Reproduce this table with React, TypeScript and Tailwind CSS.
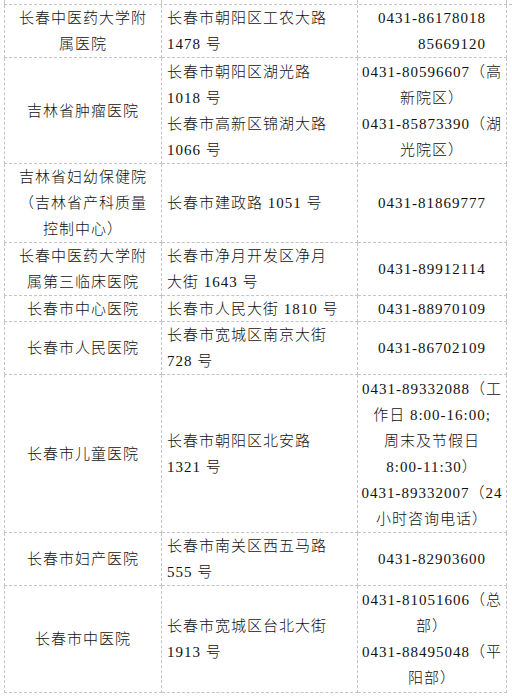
import React from "react"

type Row = {
  h: string
  name: string[]
  addr: string[]
  tel: string[]
  telClass?: string
}

const ROWS: Row[] = [
  { h: "h-[53px]", name: ["长春中医药大学附", "属医院"], addr: ["长春市朝阳区工农大路", "1478 号"], tel: ["0431-86178018", "85669120"], telClass: "items-end" },
  { h: "h-[106px]", name: ["吉林省肿瘤医院"], addr: ["长春市朝阳区湖光路", "1018 号", "长春市高新区锦湖大路", "1066 号"], tel: ["0431-80596607（高", "新院区）", "0431-85873390（湖", "光院区）"] },
  { h: "h-[79px]", name: ["吉林省妇幼保健院", "（吉林省产科质量", "控制中心）"], addr: ["长春市建政路 1051 号"], tel: ["0431-81869777"] },
  { h: "h-[53px]", name: ["长春中医药大学附", "属第三临床医院"], addr: ["长春市净月开发区净月", "大街 1643 号"], tel: ["0431-89912114"] },
  { h: "h-[26px]", name: ["长春市中心医院"], addr: ["长春市人民大街 1810 号"], tel: ["0431-88970109"] },
  { h: "h-[53px]", name: ["长春市人民医院"], addr: ["长春市宽城区南京大街", "728 号"], tel: ["0431-86702109"] },
  { h: "h-[158px]", name: ["长春市儿童医院"], addr: ["长春市朝阳区北安路", "1321 号"], tel: ["0431-89332088（工", "作日 8:00-16:00;", "周末及节假日", "8:00-11:30）", "0431-89332007（24", "小时咨询电话）"] },
  { h: "h-[53px]", name: ["长春市妇产医院"], addr: ["长春市南关区西五马路", "555 号"], tel: ["0431-82903600"] },
  { h: "h-[107px]", name: ["长春市中医院"], addr: ["长春市宽城区台北大街", "1913 号"], tel: ["0431-81051606（总", "部）", "0431-88495048（平", "阳部）"] },
]

const cell = "border-r border-b border-dashed border-[#c4c4c4] flex flex-col justify-center"

export default function App() {
  return (
    <div
      className="w-[512px] h-[698px] bg-white text-[#111] text-[15px] leading-[26px] tracking-[1px] font-light"
      style={{ fontFamily: '"Liberation Serif", "Noto Sans CJK SC", serif' }}
    >
      <div className="pl-[4px]">
        <div className="grid grid-cols-[158px_196px_149px] h-[4px]">
          <div className="border-l border-r border-dashed border-[#c4c4c4]" />
          <div className="border-r border-dashed border-[#c4c4c4]" />
          <div className="border-r border-dashed border-[#c4c4c4]" />
        </div>
        <div className="grid grid-cols-[158px_196px_149px] border-t border-dashed border-[#c4c4c4]">
          {ROWS.map((r, i) => (
            <React.Fragment key={i}>
              <div className={`${cell} ${r.h} border-l items-center text-center whitespace-nowrap`}>
                {r.name.map((t, j) => (
                  <div key={j}>{t}</div>
                ))}
              </div>
              <div className={`${cell} ${r.h} pl-[5px] whitespace-nowrap`}>
                {r.addr.map((t, j) => (
                  <div key={j}>{t}</div>
                ))}
              </div>
              <div className={`${cell} ${r.h} items-center whitespace-nowrap`}>
                <div className={`flex flex-col ${r.telClass ?? "items-center"}`}>
                  {r.tel.map((t, j) => (
                    <div key={j}>{t}</div>
                  ))}
                </div>
              </div>
            </React.Fragment>
          ))}
        </div>
      </div>
    </div>
  )
}
